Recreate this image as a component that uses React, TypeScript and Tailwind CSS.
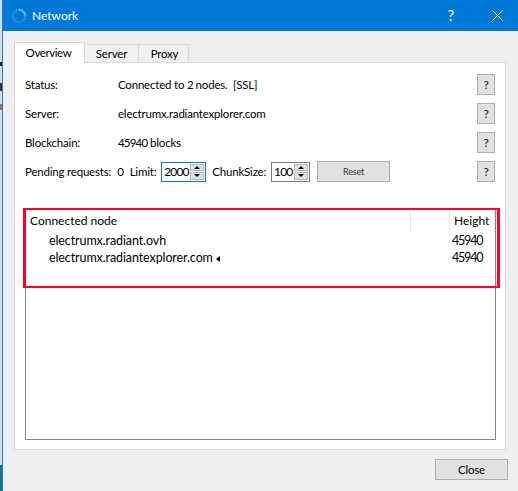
import React from "react";

// Small help button on the right of each row
const HelpButton = () => (
  <button className="w-[18px] h-[21px] bg-[#e1e1e1] border border-[#adadad] text-[12px] leading-none text-[#1a1030] shrink-0 ml-auto">
    ?
  </button>
);

// Spin box with up / down arrows
const SpinBox = ({ value, width, focused }: { value: string; width: string; focused?: boolean }) => (
  <div className={`${width} h-[20px] flex items-center justify-between bg-white border ${focused ? "border-[#0078d7]" : "border-[#7a7a7a]"} pl-[2px] pr-[1px] shrink-0`}>
    <span className="text-[12px] leading-none tracking-[-0.9px]">{value}</span>
    <div className="flex flex-col w-[14px] h-[16px] gap-px">
      <div className="flex-1 bg-[#e1e1e1] border border-[#b5b5b5] flex items-center justify-center">
        <div className="w-0 h-0 border-x-[3px] border-x-transparent border-b-[3px] border-b-black" />
      </div>
      <div className="flex-1 bg-[#e1e1e1] border border-[#b5b5b5] flex items-center justify-center">
        <div className="w-0 h-0 border-x-[3px] border-x-transparent border-t-[3px] border-t-black" />
      </div>
    </div>
  </div>
);

const InfoRow = ({ label, children }: { label: string; children: React.ReactNode }) => (
  <div className="flex items-center h-[21px]">
    <span className="w-[93px]">{label}</span>
    <span className="whitespace-pre">{children}</span>
    <HelpButton />
  </div>
);

const Spinner = () => (
  <svg width="16" height="16" viewBox="0 0 16 16" className="shrink-0">
    <circle cx="8" cy="8" r="6.2" fill="none" stroke="#3a9fe4" strokeWidth="2" strokeDasharray="1.3 1" />
    <path d="M8 1.8A6.2 6.2 0 0 1 14.2 8" fill="none" stroke="#8ccbf2" strokeWidth="2" strokeDasharray="1.3 1" />
  </svg>
);

export default function App() {
  return (
    <div className="flex w-[518px] h-[491px] overflow-hidden bg-[#f0f0f0] text-[11.5px] tracking-[-0.2px] text-black [font-family:'Lato',sans-serif]">
      {/* sliver of the desktop behind the window */}
      <div className="w-[2px] shrink-0 flex flex-col bg-[#dcdcdc]">
        <div className="h-[62px]" />
        <div className="h-[4px] bg-[#222]" />
        <div className="h-[17px]" />
        <div className="h-[8px] bg-[#5a1a50]" />
        <div className="h-[13px]" />
        <div className="h-[6px] bg-[#c8603a]" />
        <div className="flex-1" />
        <div className="h-[26px] bg-[#1f6f8f]" />
      </div>
      <div className="flex-1 flex flex-col border-l border-[#0a84e0] bg-[#efefef]">
        {/* Title bar */}
        <div className="h-[31px] bg-[#0078d7] text-white flex items-center pl-[8px] shrink-0">
          <Spinner />
          <span className="ml-[5px] text-[12px] tracking-normal pt-[1px]">Network</span>
          <span className="ml-auto text-[15px] mr-[38px] mt-[-1px]">?</span>
          <svg width="11" height="11" viewBox="0 0 11 11" className="mr-[15px]">
            <path d="M0.5 0.5L10.5 10.5M10.5 0.5L0.5 10.5" stroke="#fff" strokeWidth="1" fill="none" />
          </svg>
        </div>

        <div className="pl-[11px] pr-[11px] pt-[11px]">
          {/* Tabs */}
          <div className="flex items-end h-[21px] relative z-10 -mb-px">
            <div className="w-[71px] h-[21px] bg-white border border-b-0 border-[#d9d9d9] flex items-center justify-center pb-[1px] pr-[2px] tracking-[-0.4px]">Overview</div>
            <div className="w-[54px] h-[18px] mb-px bg-[#f0f0f0] border-t border-r border-[#d9d9d9] flex items-center justify-center">Server</div>
            <div className="w-[50px] h-[18px] mb-px bg-[#f0f0f0] border-t border-r border-[#d9d9d9] flex items-center justify-center pl-[2px]">Proxy</div>
          </div>

          {/* Tab pane */}
          <div className="w-[492px] h-[388px] bg-white border border-[#d9d9d9] pt-[11px] px-[10px] flex flex-col">
            <div className="flex flex-col gap-[8px]">
              <InfoRow label="Status:">Connected to <span className="tracking-[-0.8px]">2</span> nodes.  [SSL]</InfoRow>
              <InfoRow label="Server:">electrumx.radiantexplorer.com</InfoRow>
              <InfoRow label="Blockchain:"><span className="tracking-[-0.8px]">45940</span> blocks</InfoRow>
              <div className="flex items-center h-[21px]">
                <span>Pending requests:</span>
                <span className="ml-[6px]">0</span>
                <span className="ml-[6px]">Limit:</span>
                <div className="ml-[5px]"><SpinBox value="2000" width="w-[45px]" focused /></div>
                <span className="ml-[6px]">ChunkSize:</span>
                <div className="ml-[5px]"><SpinBox value="100" width="w-[39px]" /></div>
                <button className="ml-[7px] w-[73px] h-[21px] bg-[#e1e1e1] border border-[#adadad] text-[9px] text-[#333]">Reset</button>
                <HelpButton />
              </div>
            </div>

            {/* Connected nodes tree */}
            <div className="relative mt-[27px] w-[471px] h-[231px] border border-[#828790]">
              <div className="flex h-[22px] items-center text-[12px] tracking-normal">
                <div className="w-[384px] pl-[4px] h-full flex items-center">Connected node</div>
                <div className="w-[39px] h-full border-l border-[#e5e5e5]" />
                <div className="flex-1 h-full border-x border-[#e5e5e5] pl-[4px] flex items-center">Height</div>
              </div>
              <div className="flex flex-col pt-[1px] text-[12.5px] tracking-[-0.1px]">
                <div className="flex items-center h-[17px] pl-[23px]">
                  <span className="w-[403px]">electrumx.radiant.ovh</span>
                  <span className="tracking-[-1.2px]">45940</span>
                </div>
                <div className="flex items-center h-[17px] pl-[23px]">
                  <span className="w-[403px] flex items-center">
                    electrumx.radiantexplorer.com
                    <span className="ml-[3px] w-0 h-0 border-y-[3px] border-y-transparent border-r-[4px] border-r-black" />
                  </span>
                  <span className="tracking-[-1.2px]">45940</span>
                </div>
              </div>
              {/* red annotation box over the table */}
              <div className="absolute left-[-3px] top-[-2px] w-[477px] h-[80px] border-y-2 border-x-[3px] border-[#ff0028] pointer-events-none" />
            </div>
          </div>

          {/* Footer */}
          <div className="flex justify-end mt-[9px] -mr-[1px]">
            <button className="w-[73px] h-[21px] bg-[#e1e1e1] border border-[#adadad] text-[11.5px]">Close</button>
          </div>
        </div>
      </div>
    </div>
  );
}
